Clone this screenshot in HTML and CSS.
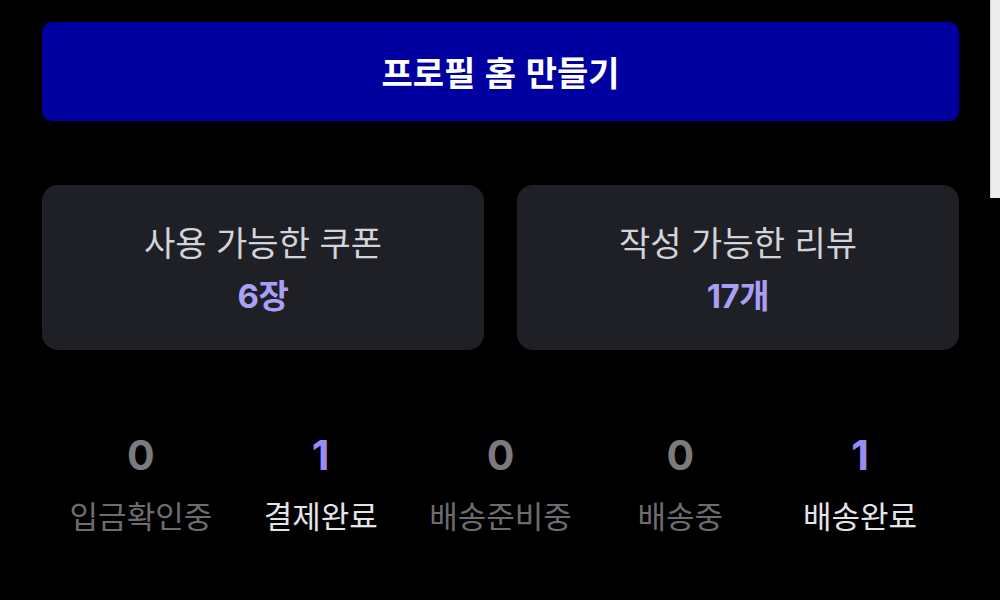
FILE: index.html
```html
<!DOCTYPE html>
<html lang="ko">
<head>
<meta charset="utf-8">
<title>마이페이지</title>
<link rel="stylesheet" href="styles.css">
</head>
<body>
<main class="page">
  <button class="profile-btn" type="button">프로필 홈 만들기</button>

  <section class="cards">
    <div class="card">
      <div class="card-title">사용 가능한 쿠폰</div>
      <div class="card-value">6장</div>
    </div>
    <div class="card">
      <div class="card-title">작성 가능한 리뷰</div>
      <div class="card-value">17개</div>
    </div>
  </section>

  <section class="status">
    <div class="step">
      <div class="step-num">0</div>
      <div class="step-label">입금확인중</div>
    </div>
    <div class="step active">
      <div class="step-num">1</div>
      <div class="step-label">결제완료</div>
    </div>
    <div class="step">
      <div class="step-num">0</div>
      <div class="step-label">배송준비중</div>
    </div>
    <div class="step">
      <div class="step-num">0</div>
      <div class="step-label">배송중</div>
    </div>
    <div class="step active">
      <div class="step-num">1</div>
      <div class="step-label">배송완료</div>
    </div>
  </section>
</main>
<div class="scroll-strip"></div>
</body>
</html>
```

FILE: styles.css
```css
html, body {
  margin: 0;
  padding: 0;
  background: #000;
  height: 100%;
  overflow: hidden;
}

body {
  font-family: "Inter", "Noto Sans CJK KR", sans-serif;
  color: #fff;
}

.page {
  padding: 22px 41px 0 42px;
  display: flex;
  flex-direction: column;
}

.profile-btn {
  height: 99px;
  border: none;
  border-radius: 10px;
  background: #0000a0;
  color: #fff;
  font-family: "Noto Sans CJK KR", sans-serif;
  font-weight: 700;
  font-size: 34px;
  letter-spacing: 0;
  cursor: pointer;
  padding: 0;
}

.cards {
  margin-top: 64px;
  display: grid;
  grid-template-columns: 1fr 1fr;
  gap: 33px;
}

.card {
  height: 165px;
  background: #1f2025;
  border-radius: 16px;
  display: flex;
  flex-direction: column;
  align-items: center;
  justify-content: center;
  gap: 12px;
}

.card-title {
  font-family: "Noto Sans CJK KR", sans-serif;
  font-size: 34px;
  line-height: 44px;
  color: #d3d3da;
  font-weight: 400;
}

.card-value {
  font-family: "Inter", "Noto Sans CJK KR", sans-serif;
  font-size: 33px;
  line-height: 40px;
  font-weight: 700;
  color: #a99ff5;
  letter-spacing: -0.5px;
}

.status {
  margin-top: 80px;
  padding: 0 9px;
  display: grid;
  grid-template-columns: repeat(5, 1fr);
}

.step {
  display: flex;
  flex-direction: column;
  align-items: center;
  gap: 15px;
}

.step-num {
  font-family: "Inter", sans-serif;
  font-weight: 700;
  font-size: 41px;
  line-height: 50px;
  color: #7a7a7f;
}

.step-label {
  font-family: "Noto Sans CJK KR", sans-serif;
  font-size: 31px;
  line-height: 40px;
  color: #6c6c71;
}

.step.active .step-num {
  color: #9a8cf2;
}

.step.active .step-label {
  color: #e4e4e8;
}

.scroll-strip {
  position: absolute;
  top: 0;
  right: 0;
  width: 9px;
  height: 198px;
  background: #ededed;
  border-left: 1px solid #d0d0d0;
}
```
